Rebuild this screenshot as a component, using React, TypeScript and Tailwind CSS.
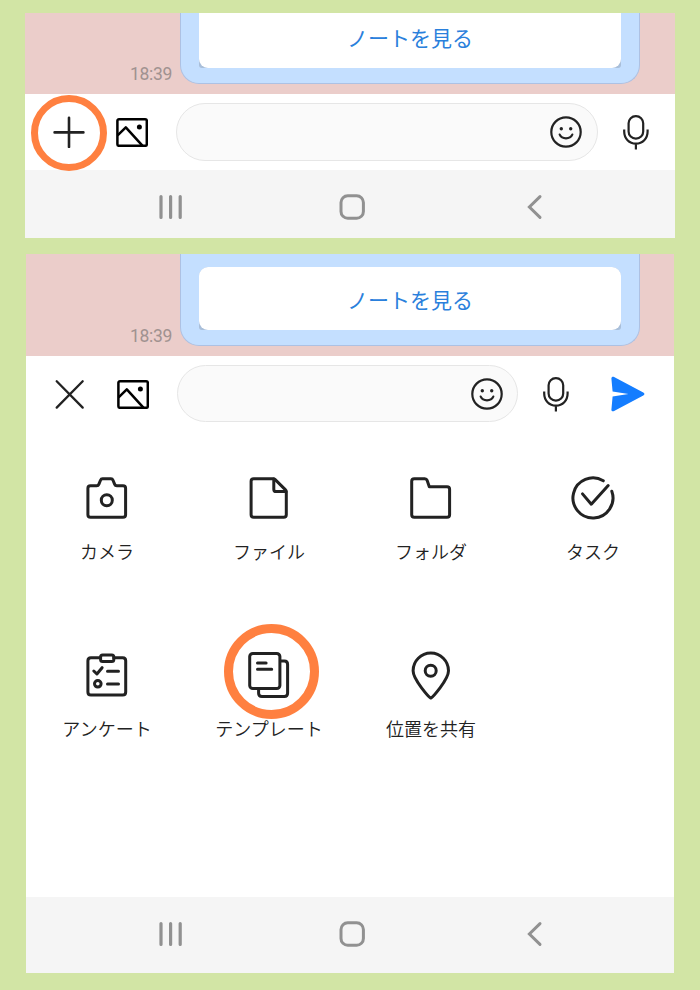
import type { ReactNode } from 'react'
import { clsx } from 'clsx'

interface IconProps {
  className?: string
}

function PlusIcon({ className }: IconProps) {
  return (
    <svg width="32" height="32" viewBox="0 0 32 32" fill="none" stroke="#222" strokeWidth="2.6" strokeLinecap="round" className={className}>
      <path d="M16 1.8V31M1.6 16.4H30.4" />
    </svg>
  )
}

function CloseIcon({ className }: IconProps) {
  return (
    <svg width="32" height="32" viewBox="0 0 32 32" fill="none" stroke="#222" strokeWidth="2.3" strokeLinecap="round" className={className}>
      <path d="M3.7 3.2L29.7 29.6M29.7 3.2L3.7 29.6" />
    </svg>
  )
}

function PictureIcon({ className }: IconProps) {
  return (
    <svg width="32" height="30" viewBox="0 0 32 30" fill="none" stroke="#000" strokeWidth="2.5" strokeLinejoin="round" className={className}>
      <rect x="1.4" y="2.2" width="29.4" height="26.6" rx="1.6" />
      <path d="M1.6 18.3L9.8 10.3L26.4 28.6" />
      <circle cx="23.4" cy="9.9" r="2.5" fill="#000" stroke="none" />
    </svg>
  )
}

function SmileIcon({ className }: IconProps) {
  return (
    <svg width="32" height="32" viewBox="0 0 32 32" fill="none" stroke="#222" strokeWidth="2.2" strokeLinecap="round" className={className}>
      <circle cx="16" cy="16" r="14.7" />
      <circle cx="11.3" cy="12.7" r="1.7" fill="#222" stroke="none" />
      <circle cx="20.7" cy="12.7" r="1.7" fill="#222" stroke="none" />
      <path d="M9.7 18.6C12 23.5 20 23.5 22.3 18.6" />
    </svg>
  )
}

function MicIcon({ className }: IconProps) {
  return (
    <svg width="28" height="36" viewBox="0 0 28 36" fill="none" stroke="#222" strokeWidth="2.2" className={className}>
      <rect x="6.6" y="2.1" width="14.6" height="22.6" rx="7.2" />
      <path d="M2.2 15.5V17.5C2.2 24.5 7.2 29.6 13.9 29.6C20.6 29.6 25.6 24.5 25.6 17.5V15.5M13.9 29.6V35.6" />
    </svg>
  )
}

function SendIcon({ className }: IconProps) {
  return (
    <svg width="34" height="36" viewBox="0 0 34 36" fill="#147dff" className={className}>
      <path d="M0.4 2.4C0.4 0.9 1.8 0.3 3.1 1L32.3 16.6C33.8 17.5 33.8 18.6 32.3 19.5L3.1 35C1.8 35.7 0.4 35.1 0.4 33.7L1.6 20.4L17.5 18L1.6 15.6Z" />
    </svg>
  )
}

function TileIcon({ children }: { children: ReactNode }) {
  return (
    <svg
      width="48"
      height="48"
      viewBox="0.5 0 48 48"
      fill="none"
      stroke="#222"
      strokeWidth="3"
      strokeLinecap="round"
      strokeLinejoin="round"
      className="overflow-visible"
    >
      {children}
    </svg>
  )
}

const tiles = [
  {
    label: 'カメラ',
    icon: (
      <>
        <path d="M8 11.7H14.2Q15.8 11.7 16.3 10.4L18 6.2Q18.6 4.7 20 4.7H28.5Q29.9 4.7 30.5 6.2L32.2 10.4Q32.7 11.7 34.3 11.7H40.5Q43.1 11.7 43.1 14.3V40.7Q43.1 43.3 40.5 43.3H8Q5.4 43.3 5.4 40.7V14.3Q5.4 11.7 8 11.7Z" />
        <circle cx="24.3" cy="26.3" r="5.5" />
      </>
    ),
  },
  {
    label: 'ファイル',
    icon: (
      <>
        <path d="M9.2 4.7H28.6Q29.8 4.7 30.7 5.6L40.8 15.6Q41.8 16.6 41.8 17.8V40.7Q41.8 43.3 39.2 43.3H9.2Q6.6 43.3 6.6 40.7V7.3Q6.6 4.7 9.2 4.7Z" />
        <path d="M29.3 5V15.2Q29.3 17.6 31.7 17.6H41.5" />
      </>
    ),
  },
  {
    label: 'フォルダ',
    icon: (
      <path d="M7.8 4.7H18.3Q20 4.7 20.6 6.3L22.8 12.7H40.5Q43.1 12.7 43.1 15.3V40.7Q43.1 43.3 40.5 43.3H7.8Q5.2 43.3 5.2 40.7V7.3Q5.2 4.7 7.8 4.7Z" />
    ),
  },
  {
    label: 'タスク',
    icon: (
      <>
        <path d="M34.8 6.8A20 20 0 1 0 43.3 17.2" />
        <path d="M14 19.9L22.8 30.2L39.7 11.5" />
      </>
    ),
  },
  {
    label: 'アンケート',
    icon: (
      <>
        <path d="M18 6.8H8.4Q5.4 6.8 5.4 9.8V41Q5.4 44 8.4 44H40.2Q43.2 44 43.2 41V9.8Q43.2 6.8 40.2 6.8H31.3" />
        <rect x="18.1" y="4" width="13.2" height="6.4" rx="2" />
        <path d="M11.3 20L14.4 23L19.6 16.7M25 20.3H36M25 33H36" />
        <circle cx="15.3" cy="32.8" r="3.3" />
      </>
    ),
  },
  {
    label: 'テンプレート',
    icon: (
      <>
        <rect x="5.2" y="2.4" width="30.2" height="35.2" rx="3.2" />
        <path d="M13 12H21.6M13 18.3H27.2" />
        <path d="M36 10.1H39.8Q43.1 10.1 43.1 13.4V42.2Q43.1 45.5 39.8 45.5H17.4Q14.1 45.5 14.1 42.2V38.5" />
      </>
    ),
  },
  {
    label: '位置を共有',
    icon: (
      <>
        <path d="M24.3 47.1C22.8 46.4 6.6 28.8 6.6 19.8A17.7 17.7 0 0 1 42 19.8C42 28.8 25.8 46.4 24.3 47.1Z" />
        <circle cx="24.2" cy="19.8" r="5.5" />
      </>
    ),
  },
]

function NavBar({ className }: IconProps) {
  return (
    <div className={clsx('flex items-center bg-[#f5f5f5]', className)}>
      <svg width="24" height="26" viewBox="0 0 24 26" fill="none" stroke="#919191" strokeWidth="3.2" strokeLinecap="round" className="ml-[134px]">
        <path d="M2 2.6V23.4M11.6 2.6V23.4M21.2 2.6V23.4" />
      </svg>
      <svg width="26" height="26" viewBox="0 0 26 26" fill="none" stroke="#919191" strokeWidth="3" className="ml-[156px]">
        <rect x="2" y="1.8" width="22.4" height="22.4" rx="6.8" />
      </svg>
      <svg width="16" height="26" viewBox="0 0 16 26" fill="none" stroke="#919191" strokeWidth="3" strokeLinecap="round" className="ml-[162px]">
        <path d="M13 2.6L2.4 13L13 23.4" />
      </svg>
    </div>
  )
}

// Bottom part of the chat, with the last message cut off at the top
function ChatStrip({ className, cardClassName }: { className: string; cardClassName: string }) {
  return (
    <div className={clsx('flex items-start bg-[#ebcdca]', className)}>
      <div className="flex h-full grow items-end justify-end pr-2 pb-[10px]">
        <span className="font-[Roboto,sans-serif] text-[17.5px] leading-5 tracking-[-0.3px] text-[#a09290]">18:39</span>
      </div>
      <div className="w-[460px] shrink-0 rounded-b-[19px] border border-t-0 border-[#adc1e3] bg-[#c4dfff] px-[18px] pb-[15px]">
        <div className="rounded-t-[9px] rounded-b-[3px] bg-[#a9bfda]">
          <div className={clsx('flex justify-center bg-white text-[21px] text-[#2a80dc]', cardClassName)}>
            ノートを見る
          </div>
        </div>
      </div>
    </div>
  )
}

export default function App() {
  return (
    <div className="h-[990px] w-[700px] overflow-hidden bg-[#d2e5a5] pt-[13px] font-['Noto_Sans_CJK_JP',sans-serif]">
      {/* Collapsed input bar */}
      <div className="relative ml-[25px] h-[225px] w-[650px] overflow-hidden bg-white">
        <ChatStrip className="h-[81px] pr-[35px]" cardClassName="h-[55px] rounded-b-[9px] leading-[48px]" />
        <div className="flex h-[76px] items-center">
          <PlusIcon className="ml-7" />
          <PictureIcon className="ml-[31px]" />
          <div className="ml-7 flex h-[58px] w-[422px] items-center justify-end rounded-full border border-[#e6e6e6] bg-[#fafafa] pr-[15px]">
            <SmileIcon />
          </div>
          <MicIcon className="ml-6" />
        </div>
        <NavBar className="h-[68px] pt-[6px]" />
        <div className="absolute top-[82px] left-[5.5px] size-[76px] rounded-full border-7 border-[#ff8040]" />
      </div>

      {/* Expanded menu */}
      <div className="relative mt-4 ml-[26px] flex h-[719px] w-[648px] flex-col overflow-hidden bg-white">
        <ChatStrip className="h-[102px] shrink-0 pr-[34px]" cardClassName="mt-[13px] h-[63px] rounded-[9px] leading-[64px]" />
        <div className="flex h-[76px] shrink-0 items-center">
          <CloseIcon className="ml-[27px]" />
          <PictureIcon className="ml-8" />
          <div className="mb-px ml-7 flex h-[57px] w-[341px] items-center justify-end rounded-full border border-[#e6e6e6] bg-[#fafafa] pr-[14px]">
            <SmileIcon />
          </div>
          <MicIcon className="ml-6" />
          <SendIcon className="ml-[41px]" />
        </div>
        <div className="grid grow grid-cols-4 content-start pt-[42px]">
          {tiles.map((tile) => (
            <div key={tile.label} className="flex h-[176.5px] flex-col items-center">
              <TileIcon>{tile.icon}</TileIcon>
              <span className="mt-[15px] text-[18px] leading-7 font-[350] text-[#222]">{tile.label}</span>
            </div>
          ))}
        </div>
        <NavBar className="-ml-px h-19 shrink-0 pb-[2px]" />
        <div className="absolute top-[370px] left-[198px] size-[95px] rounded-full border-9 border-[#ff8040]" />
      </div>
    </div>
  )
}
